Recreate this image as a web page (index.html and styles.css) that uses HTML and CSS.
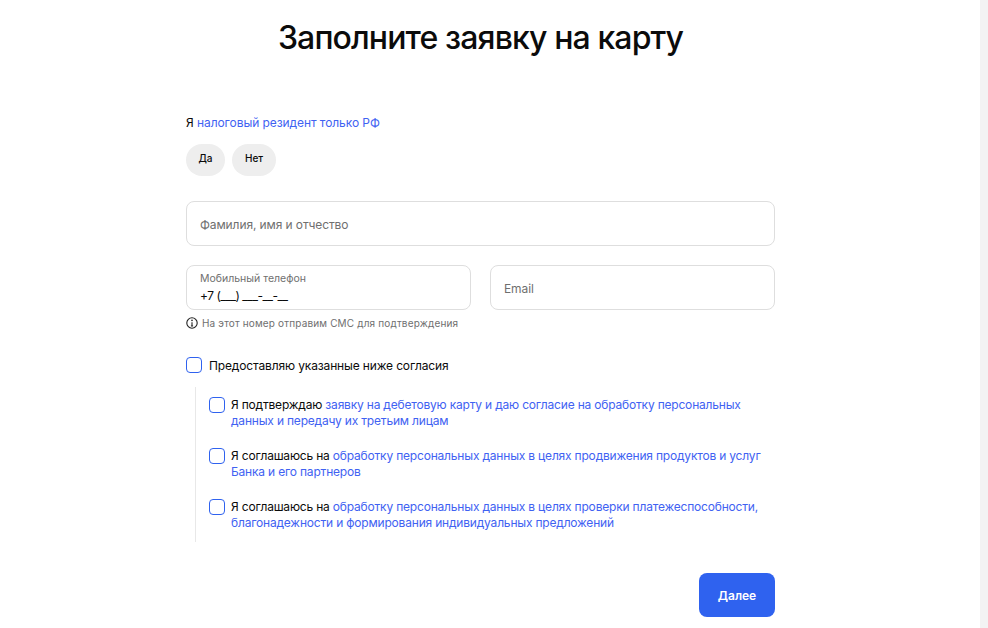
FILE: index.html
```html
<!DOCTYPE html>
<html lang="ru">
<head>
<meta charset="UTF-8">
<meta name="viewport" content="width=device-width, initial-scale=1.0">
<title>Заявка на карту</title>
<link rel="stylesheet" href="styles.css">
</head>
<body>

<div class="page">
    <div class="container">
        <h1>Заполните заявку на карту</h1>

        <p class="resident">Я <a href="#">налоговый резидент только РФ</a></p>
        <div class="choice">
            <button class="pill pill-yes">Да</button>
            <button class="pill pill-no">Нет</button>
        </div>

        <div class="field field-wide"><span class="field-text">Фамилия, имя и отчество</span></div>

        <div class="contact-row">
            <div class="contact-col">
                <div class="field field-phone">
                    <span class="field-label">Мобильный телефон</span>
                    <span class="field-value">+7 (___) ___-__-__</span>
                </div>
                <div class="hint">
                    <svg class="hint-icon" width="12" height="12" viewBox="0 0 12 12" fill="none">
                        <circle cx="6" cy="6" r="5.2" stroke="#222" stroke-width="1.1"/>
                        <path d="M6 5.2V9M4.9 9h2.2" stroke="#222" stroke-width="1.1"/>
                        <circle cx="6" cy="3.4" r="0.8" fill="#222"/>
                    </svg>
                    На этот номер отправим СМС для подтверждения
                </div>
            </div>
            <div class="contact-col">
                <div class="field"><span class="field-text">Email</span></div>
            </div>
        </div>

        <label class="check check-all">
            <span class="box"></span>
            <span>Предоставляю указанные ниже согласия</span>
        </label>

        <div class="consents">
            <label class="check">
                <span class="box"></span>
                <span>Я подтверждаю <a href="#">заявку на дебетовую карту и даю согласие на обработку персональных данных и передачу их третьим лицам</a></span>
            </label>
            <label class="check">
                <span class="box"></span>
                <span>Я соглашаюсь на <a href="#">обработку персональных данных в целях продвижения продуктов и услуг Банка и его партнеров</a></span>
            </label>
            <label class="check">
                <span class="box"></span>
                <span>Я соглашаюсь на <a href="#">обработку персональных данных в целях проверки платежеспособности, благонадежности и формирования индивидуальных предложений</a></span>
            </label>
        </div>

        <div class="actions">
            <button class="next-button">Далее</button>
        </div>
    </div>
    <div class="scroll-track"></div>
</div>

</body>
</html>
```

FILE: styles.css
```css
html, body {
    height: 100%;
}
body {
    margin: 0;
    background-color: white;
    color: #0b0b0b;
    font-family: Inter, "Noto Sans", sans-serif;
    overflow: hidden;
}
a {
    color: #3f62f2;
    text-decoration: none;
}
.page {
    display: flex;
    height: 628px;
    overflow: hidden;
}
.container {
    flex: 1;
    padding: 0 205px 0 186px;
}
.scroll-track {
    width: 8px;
    background-color: #f3f3f3;
}
h1 {
    margin: 17px 0 0;
    font-size: 32px;
    line-height: 42px;
    font-weight: 500;
    text-align: center;
    letter-spacing: -0.88px;
}
.resident {
    margin: 55px 0 0;
    font-size: 12px;
    line-height: 18px;
    letter-spacing: -0.07px;
}
.choice {
    display: flex;
    gap: 7px;
    margin-top: 12px;
}
.pill {
    height: 32px;
    width: 39px;
    padding: 0 0 4px;
    border: none;
    border-radius: 16px;
    background-color: #eeeeee;
    color: #0b0b0b;
    font-family: inherit;
    font-size: 10px;
    font-weight: 500;
}
.pill-no {
    width: 44px;
}
.field {
    box-sizing: border-box;
    height: 45px;
    padding: 0 13px;
    border: 1px solid #dedede;
    border-radius: 8px;
    display: flex;
    align-items: center;
    color: #6f6f6f;
    font-size: 12px;
}
.field-text {
    padding-top: 2px;
    letter-spacing: -0.1px;
}
.field-wide {
    margin-top: 25px;
}
.contact-row {
    display: flex;
    gap: 19px;
    margin-top: 19px;
}
.contact-col {
    flex: 1;
}
.field-phone {
    flex-direction: column;
    align-items: flex-start;
    justify-content: center;
    padding-top: 1px;
}
.field-label {
    font-size: 10.5px;
    line-height: 15px;
}
.field-value {
    font-size: 12px;
    line-height: 19px;
    color: #0b0b0b;
    letter-spacing: -0.45px;
}
.hint {
    display: flex;
    align-items: center;
    gap: 4px;
    margin-top: 6px;
    color: #6f6f6f;
    font-size: 10px;
    line-height: 14px;
    letter-spacing: 0.16px;
    white-space: nowrap;
}
.check {
    display: flex;
    gap: 7px;
    font-size: 12px;
    line-height: 17px;
    letter-spacing: -0.14px;
}
.box {
    flex: none;
    box-sizing: border-box;
    width: 16px;
    height: 16px;
    border: 1px solid #2f62ef;
    border-radius: 4px;
}
.check-all {
    margin-top: 27px;
}
.consents {
    margin: 13px 0 0 9px;
    padding: 10px 0 11px 13px;
    border-left: 1px solid #e8e8e8;
    display: flex;
    flex-direction: column;
    gap: 19px;
}
.consents .check {
    gap: 6px;
    line-height: 16px;
    letter-spacing: -0.19px;
}
.actions {
    display: flex;
    justify-content: flex-end;
    margin-top: 31px;
}
.next-button {
    width: 76px;
    height: 44px;
    border: none;
    border-radius: 8px;
    background-color: #2f62ef;
    color: white;
    font-family: inherit;
    font-size: 12px;
    font-weight: 600;
}
```
